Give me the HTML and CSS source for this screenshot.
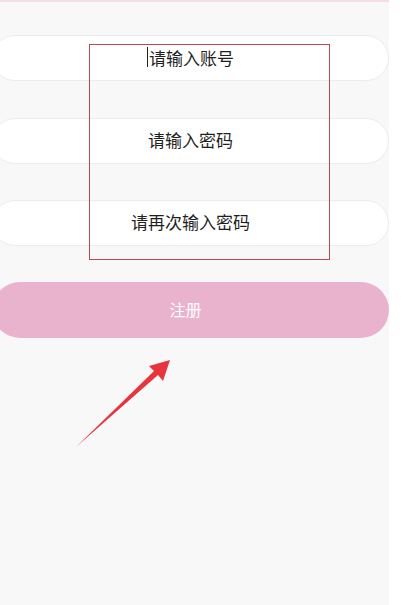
FILE: index.html
```html
<!DOCTYPE html>
<html lang="zh-CN">
<head>
    <meta charset="UTF-8">
    <meta name="viewport" content="width=device-width, initial-scale=1.0">
    <title>注册</title>
    <link rel="stylesheet" href="styles.css">
</head>
<body>
    <!-- Register screen -->
    <main class="screen">
        <div class="top-bar"></div>

        <form class="register-form">
            <div class="field"><span class="caret"></span>请输入账号</div>
            <div class="field">请输入密码</div>
            <div class="field">请再次输入密码</div>
            <button type="button" class="register-btn">注册</button>
        </form>

        <!-- Annotation: box around the inputs and arrow pointing at the button -->
        <div class="mark-box"></div>
        <svg class="mark-arrow" width="412" height="605" viewBox="0 0 412 605">
            <path d="M76 447 L154 371 L149 366 L170 360 L163 381 L158 375 Z" fill="#e8343c"/>
        </svg>
    </main>
    <div class="side-strip"></div>
</body>
</html>
```

FILE: styles.css
```css
/* === Base === */
* {
    margin: 0;
    padding: 0;
    box-sizing: border-box;
    font-family: 'Noto Sans CJK SC', 'Noto Sans', sans-serif;
}

body {
    background: #ffffff;
    display: flex;
    width: 412px;
    height: 605px;
    overflow: hidden;
}

.screen {
    position: relative;
    width: 389px;
    height: 605px;
    background: #f8f8f8;
    overflow: hidden;
}

.side-strip {
    flex: 1;
    background: #ffffff;
}

.top-bar {
    height: 2px;
    background: #f6dbe8;
}

/* === Form === */
.register-form {
    display: flex;
    flex-direction: column;
    gap: 36px;
    padding-top: 33px;
    margin-left: -8px;
    width: 397px;
}

.field {
    height: 46px;
    border-radius: 23px;
    background: #ffffff;
    border: 1px solid #ececec;
    display: flex;
    align-items: center;
    justify-content: center;
    font-size: 17px;
    color: #1f1f1f;
    padding-bottom: 3px;
}

.field:first-child {
    padding-bottom: 2px;
    margin-bottom: 1px;
}

.caret {
    width: 1px;
    height: 20px;
    background: #222;
    margin-right: 1px;
}

.register-btn {
    height: 56px;
    border: none;
    border-radius: 28px;
    background: #e9b3cd;
    color: #ffffff;
    font-size: 16px;
    padding-left: 0;
    padding-right: 10px;
    padding-bottom: 2px;
}

/* === Annotations === */
.mark-box {
    position: absolute;
    left: 89px;
    top: 44px;
    width: 241px;
    height: 216px;
    border: 1px solid #bd4852;
}

.mark-arrow {
    position: absolute;
    left: 0;
    top: 0;
}
```
